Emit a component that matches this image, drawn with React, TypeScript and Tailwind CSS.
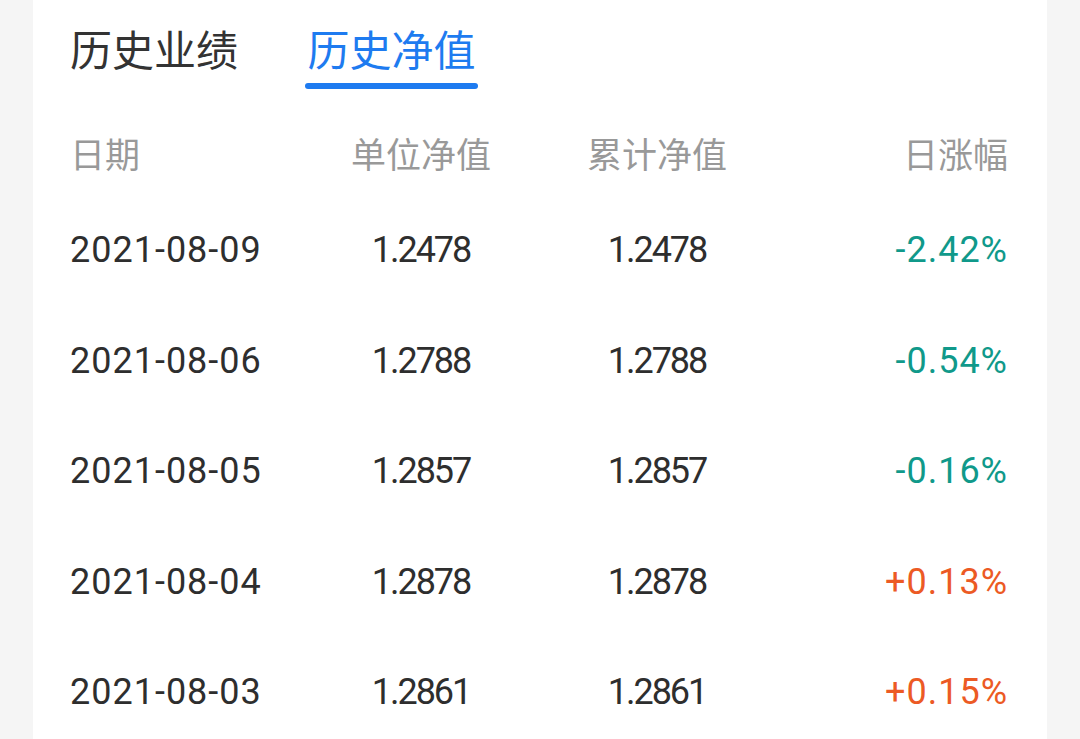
import React from "react"

const rows = [
  { date: "2021-08-09", unit: "1.2478", total: "1.2478", change: "-2.42%" },
  { date: "2021-08-06", unit: "1.2788", total: "1.2788", change: "-0.54%" },
  { date: "2021-08-05", unit: "1.2857", total: "1.2857", change: "-0.16%" },
  { date: "2021-08-04", unit: "1.2878", total: "1.2878", change: "+0.13%" },
  { date: "2021-08-03", unit: "1.2861", total: "1.2861", change: "+0.15%" },
]

const cjk = { fontFamily: '"Noto Sans CJK SC", "Noto Sans", sans-serif' }
const num = { fontFamily: 'Roboto, "Noto Sans CJK SC", sans-serif' }

const App = () => {
  return (
    <div className="min-h-[739px] w-[1080px] bg-[#f5f5f5] overflow-hidden">
      <div className="ml-[33px] w-[1014px] h-[739px] bg-white pl-[37px] pr-[39px]">
        {/* tabs */}
        <div className="flex flex-row pt-[18px]" style={cjk}>
          <div className="flex flex-col items-center w-[168px]">
            <span className="text-[42px] leading-[60px] text-[#333333]">历史业绩</span>
          </div>
          <div className="flex flex-col items-center w-[173px] ml-[67px]">
            <span className="text-[42px] leading-[60px] text-[#1e7bf0]">历史净值</span>
            <div className="mt-[5px] h-[6px] w-full rounded-full bg-[#1e7bf0]"></div>
          </div>
        </div>

        {/* header */}
        <div
          className="mt-[22px] h-[84px] grid grid-cols-[230px_242px_230px_1fr] items-center text-[35px] text-[#999999]"
          style={cjk}
        >
          <span>日期</span>
          <span className="text-center">单位净值</span>
          <span className="text-center">累计净值</span>
          <span className="text-right">日涨幅</span>
        </div>

        {/* rows */}
        {rows.map((r) => (
          <div
            key={r.date}
            className="h-[110.5px] grid grid-cols-[230px_242px_230px_1fr] items-center text-[36px] text-[#2e2e2e]"
            style={num}
          >
            <span className="tracking-[1px]">{r.date}</span>
            <span className="text-center tracking-[-2px]">{r.unit}</span>
            <span className="text-center tracking-[-2px]">{r.total}</span>
            <span
              className={`text-right tracking-[1px] ${
                r.change.startsWith("-") ? "text-[#10998a]" : "text-[#ec5a24]"
              }`}
            >
              {r.change}
            </span>
          </div>
        ))}
      </div>
    </div>
  )
}

export default App
